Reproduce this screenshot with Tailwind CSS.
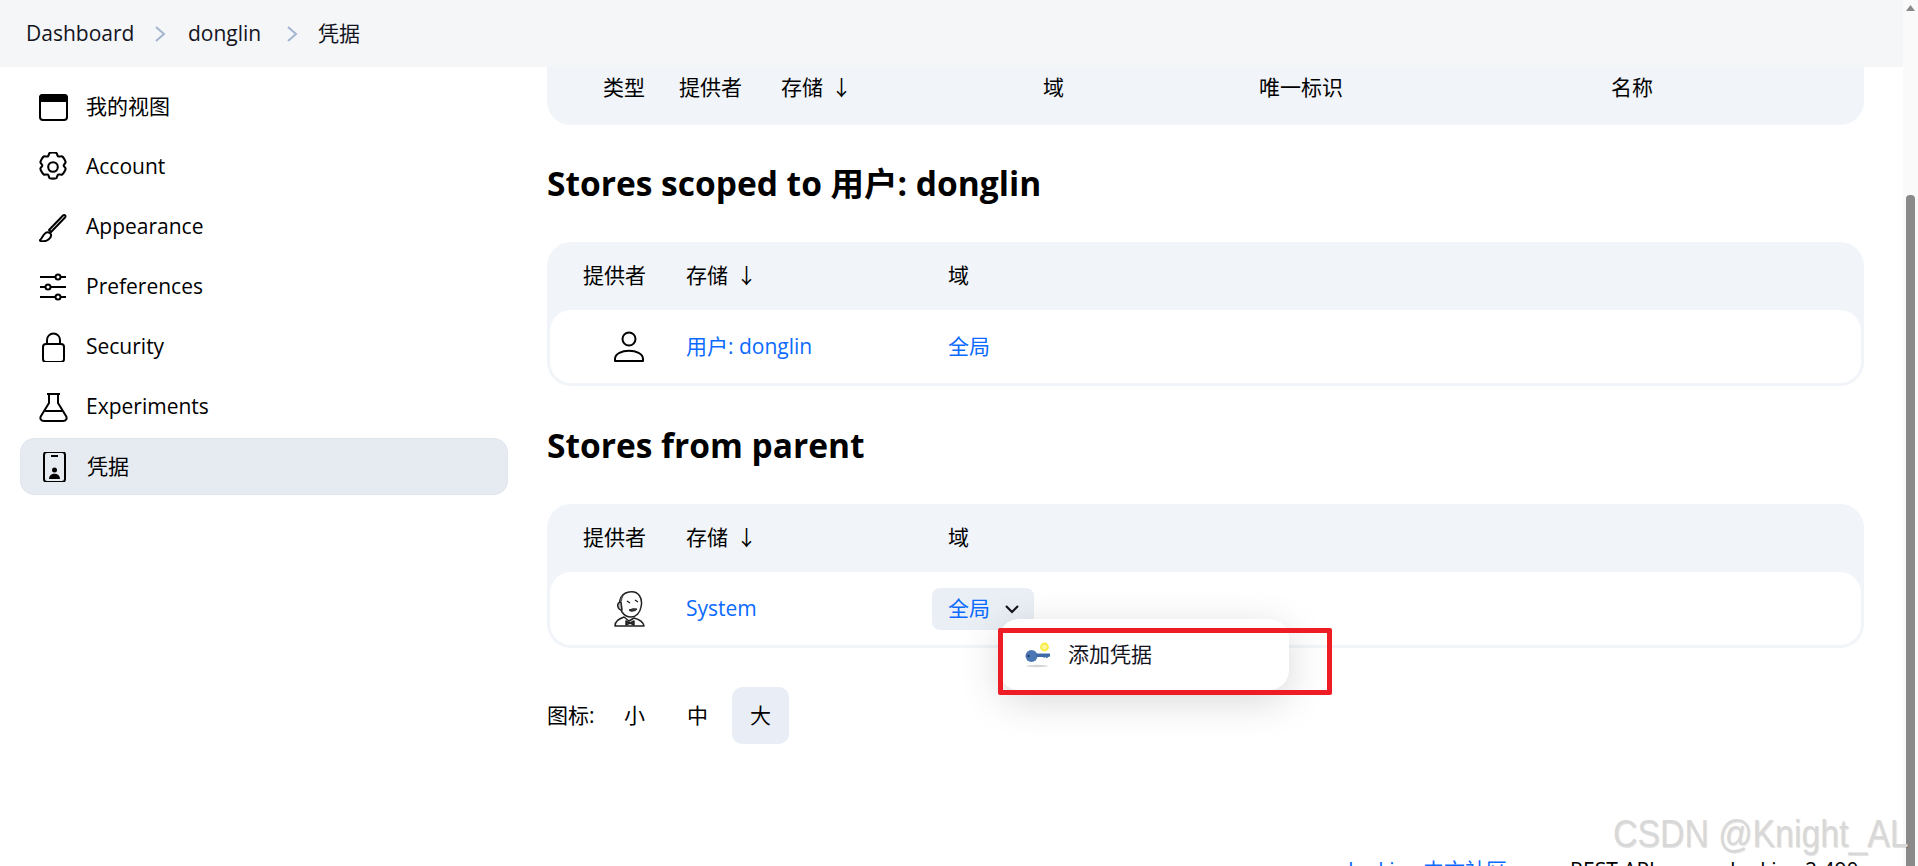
<!DOCTYPE html>
<html lang="zh">
<head>
  <meta charset="UTF-8" />
  <title>凭据</title>
  <script src="https://cdn.jsdelivr.net/npm/@tailwindcss/browser@4"></script>
</head>
<body class="h-[866px] overflow-hidden bg-white text-black text-[21px] font-['Open_Sans','Noto_Sans_CJK_SC',sans-serif]">
  <div class="flex h-[866px]">
    <div class="flex-1 min-w-0 flex flex-col overflow-hidden">

      <!-- Breadcrumb -->
      <header class="h-[67px] shrink-0 bg-[#f4f6f8] flex items-center pl-[26px] text-[#14141f]">
        <span class="w-[109px]">Dashboard</span>
        <svg class="w-[14px] h-[18px] ml-[18px] mr-[21px]" viewBox="0 0 14 18" fill="none" stroke="#a3b5d0" stroke-width="2"><path d="M3 2l8 7-8 7"/></svg>
        <span class="w-[77px]">donglin</span>
        <svg class="w-[14px] h-[18px] ml-[20px] mr-[19px]" viewBox="0 0 14 18" fill="none" stroke="#a3b5d0" stroke-width="2"><path d="M3 2l8 7-8 7"/></svg>
        <span>凭据</span>
      </header>

      <div class="flex flex-1 min-h-0">
        <!-- Sidebar -->
        <nav class="w-[547px] shrink-0 pl-[20px] pt-[11px]">
          <div class="w-[488px] flex flex-col gap-[2px]">
            <a class="h-[58px] flex items-center gap-[18px] pl-[18px]">
              <svg class="w-[30px] h-[30px]" viewBox="0 0 30 30" fill="none" stroke="#000" stroke-width="2"><rect x="2" y="3" width="27" height="25" rx="3"/><path d="M2 9V6a3 3 0 0 1 3-3h21a3 3 0 0 1 3 3v3z" fill="#000"/></svg>
              <span>我的视图</span>
            </a>
            <a class="h-[58px] flex items-center gap-[18px] pl-[18px]">
              <svg class="w-[30px] h-[30px]" viewBox="2.500 2 19 20" fill="none" stroke="#000" stroke-width="1.400" stroke-linejoin="round"><circle cx="12" cy="12" r="3.200"/><path d="M9.800 2.600c.8-.5 3.600-.5 4.400 0 .6.400.6 1.900 1.200 2.300s2-.3 2.700.1c.9.500 2.300 3 2.300 3.900 0 .8-1.300 1.400-1.300 2.100s1.300 1.300 1.300 2.100c0 .9-1.400 3.400-2.300 3.900-.7.400-2.100-.3-2.700.1s-.6 1.900-1.200 2.300c-.8.500-3.600.5-4.400 0-.6-.4-.6-1.900-1.200-2.300s-2 .3-2.700-.1c-.9-.5-2.300-3-2.300-3.900 0-.8 1.300-1.400 1.300-2.100s-1.300-1.300-1.300-2.100c0-.9 1.400-3.400 2.300-3.900.7-.4 2.100.3 2.700-.1s.6-1.900 1.200-2.300z"/></svg>
              <span>Account</span>
            </a>
            <a class="h-[58px] flex items-center gap-[18px] pl-[18px]">
              <svg class="w-[30px] h-[30px]" viewBox="0 0 30 30" fill="none" stroke="#000" stroke-width="2" stroke-linejoin="round"><path d="M11 18L25 3.500c1.500-1.500 3.500.5 2 2L13 20z"/><path d="M7.500 21c2-1.500 5-.5 5.500 1.500s-.5 3.500-2.500 5-6 2-8 1.500c-.8-.3-.8-1 0-1.500 2-1.500 2.500-5 5-6.500z"/></svg>
              <span>Appearance</span>
            </a>
            <a class="h-[58px] flex items-center gap-[18px] pl-[18px]">
              <svg class="w-[30px] h-[30px]" viewBox="0 0 30 30" fill="none" stroke="#000" stroke-width="2"><path d="M2 5h15m6 0h5M2 15h5m6 0h15M2 25h15m6 0h5"/><circle cx="20" cy="5" r="2.500"/><circle cx="10" cy="15" r="2.500"/><circle cx="20" cy="25" r="2.500"/></svg>
              <span>Preferences</span>
            </a>
            <a class="h-[58px] flex items-center gap-[18px] pl-[18px]">
              <svg class="w-[30px] h-[30px]" viewBox="0 0 30 30" fill="none" stroke="#000" stroke-width="2"><rect x="5" y="12" width="21" height="18" rx="3"/><path d="M9 12V8a6.500 6.500 0 0 1 13 0v4"/></svg>
              <span>Security</span>
            </a>
            <a class="h-[58px] flex items-center gap-[18px] pl-[18px]">
              <svg class="w-[30px] h-[30px]" viewBox="0 0 30 30" fill="none" stroke="#000" stroke-width="2" stroke-linejoin="round"><path d="M9 2h13M11 2v9L3 24c-1.500 2.500 0 5 3 5h19c3 0 4.500-2.500 3-5l-8-13V2M7 19h17"/></svg>
              <span>Experiments</span>
            </a>
            <a class="h-[57px] flex items-center gap-[18px] pl-[18px] bg-[#e6ebf2] rounded-[14px] border border-[#e0e5ee]">
              <svg class="w-[30px] h-[30px]" viewBox="0 0 30 30" fill="none" stroke="#000" stroke-width="2"><rect x="5" y="0" width="21" height="30" rx="3"/><path d="M12 4h7"/><circle cx="15.500" cy="18" r="2.500" fill="#000" stroke="none"/><path d="M10 27c0-7 11-7 11 0z" fill="#000" stroke="none"/></svg>
              <span>凭据</span>
            </a>
          </div>
        </nav>

        <!-- Main -->
        <main class="flex-1 min-w-0 pr-[39px]">
          <div class="h-[58px] bg-[#f1f4f8] rounded-b-[24px] flex items-center pb-[16px] pl-[56px]">
            <span class="w-[76px]">类型</span>
            <span class="w-[102px]">提供者</span>
            <span class="w-[262px]">存储<span class="ml-[8px]">↓</span></span>
            <span class="w-[216px]">域</span>
            <span class="w-[352px]">唯一标识</span>
            <span>名称</span>
          </div>

          <h2 class="mt-[36px] text-[33.500px] leading-[44px] font-bold">Stores scoped to 用户: donglin</h2>

          <section class="mt-[37px] bg-[#f1f4f8] rounded-[24px] p-[3px] pt-0 h-[144px] flex flex-col">
            <div class="h-[68px] shrink-0 flex items-center pl-[33px]">
              <span class="w-[103px]">提供者</span>
              <span class="w-[262px]">存储<span class="ml-[8px]">↓</span></span>
              <span>域</span>
            </div>
            <div class="flex-1 bg-white rounded-[21px] flex items-center">
              <svg class="ml-[64px] w-[30px] h-[32px]" viewBox="0 0 30 32" fill="none" stroke="#000" stroke-width="2"><circle cx="15" cy="8" r="6.500"/><path d="M1 30v-2c0-11 28-11 28 0v2z" stroke-linejoin="round"/></svg>
              <a class="ml-[42px] w-[262px] text-[#0b6aff]">用户: donglin</a>
              <a class="text-[#0b6aff]">全局</a>
            </div>
          </section>

          <h2 class="mt-[37px] text-[33.500px] leading-[44px] font-bold">Stores from parent</h2>

          <section class="mt-[37px] bg-[#f1f4f8] rounded-[24px] p-[3px] pt-0 h-[144px] flex flex-col">
            <div class="h-[68px] shrink-0 flex items-center pl-[33px]">
              <span class="w-[103px]">提供者</span>
              <span class="w-[262px]">存储<span class="ml-[8px]">↓</span></span>
              <span>域</span>
            </div>
            <div class="flex-1 bg-white rounded-[21px] flex items-center relative">
              <svg class="ml-[63px] w-[33px] h-[37px]" viewBox="0 0 33 37" fill="none" stroke="#222" stroke-width="1.500" stroke-linejoin="round">
                <path d="M2 36c0-5 4-7 9-9l5 4 5-3c4 1 9 3 10 8z" fill="#fff"/>
                <path d="M9 22C5 16 5 4 16 2c10-2 14 7 12 15-1 6-5 10-10 10-4 0-7-2-9-5z" fill="#fff"/>
                <path d="M8 12c-5 0-4 8 1 8z" fill="#bbb"/>
                <path d="M9 6c-2 2-2 4-2 6l2-1c0-2 1-4 2-6z" fill="#555" stroke="none"/>
                <path d="M14 11l3 2M22 10l3 2"/>
                <path d="M16 20q4-2 8-1-1 2-4 2-2 1-4-1z" fill="#444" stroke-width="1"/>
                <path d="M13 31l4 2 4-2v4l-4-2-4 2z" fill="#444"/>
              </svg>
              <a class="ml-[40px] w-[246px] text-[#0b6aff]">System</a>
              <div class="h-[42px] w-[102px] bg-[#eaeff6] rounded-[8px] flex items-center pl-[16px] text-[#0b6aff]">
                全局
                <svg class="ml-[14px] w-[16px] h-[16px]" viewBox="0 0 16 16" fill="none" stroke="#14141f" stroke-width="2.200"><path d="M2 5l6 6 6-6"/></svg>
              </div>

              <!-- Dropdown -->
              <div class="absolute left-[449px] top-[47px] w-[290px] h-[71px] bg-white rounded-[20px] shadow-[0_10px_40px_rgba(0,0,0,0.16)] flex items-center pl-[26px] text-[#14141f] z-10">
                <svg class="w-[26px] h-[26px]" viewBox="0 0 26 26" fill="none">
                  <ellipse cx="12" cy="24" rx="11" ry="1.200" fill="#d6d6d6"/>
                  <circle cx="19.500" cy="5" r="3.500" fill="#fff59a" stroke="#f6ee3c" stroke-width="1.800"/>
                  <circle cx="6.500" cy="14" r="6" fill="#4a77b4"/>
                  <path d="M11 11.500h14v3l-2 .5-1 1.500-1.500-1.500-1.500 1-1-1H11z" fill="#3f6ca8"/>
                  <circle cx="3.500" cy="14" r="1.100" fill="#1d2a44"/>
                </svg>
                <span class="ml-[17px]">添加凭据</span>
              </div>
            </div>
          </section>

          <div class="mt-[39px] flex items-center">
            <span class="w-[59px]">图标:</span>
            <span class="w-[57px] h-[57px] flex items-center justify-center rounded-[10px]">小</span>
            <span class="ml-[6px] w-[57px] h-[57px] flex items-center justify-center rounded-[10px]">中</span>
            <span class="ml-[6px] w-[57px] h-[57px] flex items-center justify-center rounded-[10px] bg-[#e9edf5]">大</span>
          </div>

          <!-- Footer, cut off by the window edge -->
          <footer class="mt-[112px] flex items-center pl-[801px] leading-[28px] whitespace-nowrap">
            <a class="w-[222px] text-[#0b6aff]">Jenkins 中文社区</a>
            <span class="w-[160px]">REST API</span>
            <span>Jenkins 2.490</span>
          </footer>
        </main>
      </div>
    </div>

    <!-- Scrollbar -->
    <div class="w-[15px] shrink-0 bg-[#fafafa] flex flex-col items-center relative">
      <svg class="mt-[5px] w-[9px] h-[6px]" viewBox="0 0 9 6" fill="#8a8a8a"><path d="M4.500 0L9 6H0z"/></svg>
      <div class="mt-[184px] w-[9px] flex-1 bg-[#8a8a8a] rounded-t-[4px]"></div>
    </div>
  </div>

  <!-- Annotation and watermark burned into the screenshot -->
  <div class="absolute left-[998px] top-[628px] w-[334px] h-[67px] border-[5px] border-[#ee1c25] rounded-[2px] z-20"></div>
  <div class="absolute left-[1613px] top-[811px] origin-left scale-x-[0.89] text-[38px] leading-[46px] text-[#d8d8d8] [text-shadow:1px_1px_1px_rgba(0,0,0,0.12)] font-['Liberation_Sans',sans-serif] z-20 whitespace-nowrap">CSDN @Knight_AL</div>
</body>
</html>
